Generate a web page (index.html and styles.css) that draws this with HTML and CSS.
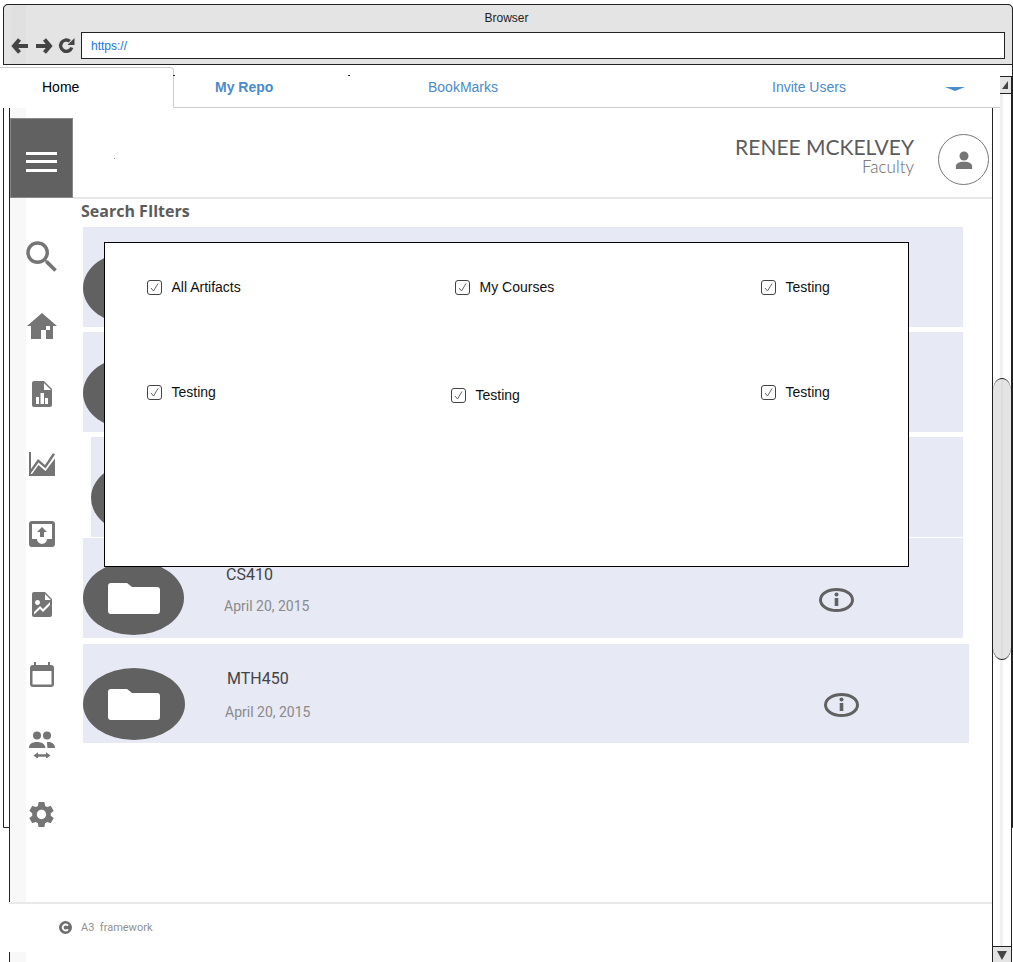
FILE: index.html
```html
<!DOCTYPE html>
<html>
	<head>
		<title>My Repo</title>
		<link rel="stylesheet" href="styles.css">
	</head>
	<body>
		<div class="page">
			<div class="frame"></div>

			<div class="chrome">
				<div class="chrome-title">Browser</div>
				<div class="chrome-bar">
					<svg class="chrome-icon" viewBox="0 0 18 18"><path d="M8.500 2.500 3 9l5.500 6.500M3.500 9H17" fill="none" stroke="#444" stroke-width="4"/></svg>
					<svg class="chrome-icon" viewBox="0 0 18 18"><path d="M9.500 2.500 15 9l-5.500 6.500M14.500 9H1" fill="none" stroke="#444" stroke-width="4"/></svg>
					<svg class="chrome-icon chrome-reload" viewBox="0 0 18 18"><path d="M14.500 11A6 6 0 1 1 12.500 4.500" fill="none" stroke="#444" stroke-width="3.600"/><path d="M10 8.500h7.500V1z" fill="#444"/></svg>
					<div class="address">https://</div>
				</div>
			</div>

			<div class="tabs">
				<div class="tab-home">Home</div>
				<div class="tab tab-repo">My Repo</div>
				<div class="tab tab-bookmarks">BookMarks</div>
				<div class="tab tab-invite">Invite Users</div>
				<div class="caret"></div>
				<span class="speck speck-a"></span>
				<span class="speck speck-b"></span>
			</div>

			<div class="workspace">
				<div class="app">
					<div class="main">
						<div class="nav">
							<div class="menu-btn">
								<span></span><span></span><span></span>
							</div>
							<div class="nav-icons">
								<div class="nav-item nav-search"><svg width="42" height="42" viewBox="0 0 24 24"><path d="M15.5 14h-.79l-.28-.27A6.471 6.471 0 0 0 16 9.5 6.5 6.5 0 1 0 9.5 16c1.61 0 3.09-.59 4.23-1.57l.27.28v.79l5 4.99L20.49 19l-4.99-5zm-6 0C7.01 14 5 11.99 5 9.5S7.01 5 9.5 5 14 7.01 14 9.5 11.99 14 9.5 14z"/></svg></div>
								<div class="nav-item nav-home"><svg width="30" height="26" viewBox="0 0 30 26"><path fill-rule="evenodd" d="M15 0 0 13h4v13h10v-9h5v9h7V13h4zM19 13h4v4h-4z"/></svg></div>
								<div class="nav-item"><svg width="20" height="26" viewBox="0 0 20 26"><path fill-rule="evenodd" d="M2 0h10l8 8v16a2 2 0 0 1-2 2H2a2 2 0 0 1-2-2V2a2 2 0 0 1 2-2zM12 2v7h7zM4 16v7h3v-7zM8.500 12v11H12V12zM13 17v6h3v-6z"/></svg></div>
								<div class="nav-item"><svg width="26" height="24" viewBox="0 0 26 24"><path d="M0 0h2v17l7-10 7 6 8-12 2 1.500-9.500 14L9.500 10.500 2 21v1h1l6.500-9 7 6L26 6.500V24H0z"/></svg></div>
								<div class="nav-item"><svg width="26" height="26" viewBox="0 0 26 26"><path fill-rule="evenodd" d="M3 0h20a3 3 0 0 1 3 3v20a3 3 0 0 1-3 3H3a3 3 0 0 1-3-3V3a3 3 0 0 1 3-3zM3 3v15h5a5 5 0 0 0 10 0h5V3zM13 6l5 5h-3v5h-4v-5H8z"/></svg></div>
								<div class="nav-item"><svg width="20" height="25" viewBox="0 0 20 25"><path fill-rule="evenodd" d="M2 0h11l7 7v16a2 2 0 0 1-2 2H2a2 2 0 0 1-2-2V2a2 2 0 0 1 2-2zM13 2v6h6zM5.500 8a2.500 2.500 0 1 0 .01 0zM2 20v2.500L8 17l3 3 7-7v-3l-7 7-3-3z"/></svg></div>
								<div class="nav-item"><svg width="24" height="25" viewBox="0 0 24 25"><path fill-rule="evenodd" d="M4 0h2v3h12V0h2v3h1a3 3 0 0 1 3 3v16a3 3 0 0 1-3 3H3a3 3 0 0 1-3-3V6a3 3 0 0 1 3-3h1zM2.500 9v13.500h19V9z"/></svg></div>
								<div class="nav-item"><svg width="26" height="27" viewBox="0 0 26 27"><circle cx="8" cy="4.500" r="4"/><circle cx="18" cy="4.500" r="4"/><path d="M0 17c0-4 3-6 8-6s8 2 8.500 6zM18 11c5-.5 8 2 8 6h-7.500c-.2-2-.5-4-.5-6z"/><path d="M9 21.200v2h8v-2l4.500 3.300L17 27.800v-2H9v2l-4.500-3.300z"/></svg></div>
								<div class="nav-item"><svg width="31" height="31" viewBox="0 0 24 24"><path d="M19.14 12.94c.04-.3.06-.61.06-.94 0-.32-.02-.64-.07-.94l2.03-1.58a.49.49 0 0 0 .12-.61l-1.92-3.32a.488.488 0 0 0-.59-.22l-2.39.96c-.5-.38-1.03-.7-1.62-.94l-.36-2.54a.484.484 0 0 0-.48-.41h-3.84c-.24 0-.43.17-.47.41l-.36 2.54c-.59.24-1.13.57-1.62.94l-2.39-.96c-.22-.08-.47 0-.59.22L2.74 8.87c-.12.21-.08.47.12.61l2.03 1.58c-.05.3-.09.63-.09.94s.02.64.07.94l-2.03 1.58a.49.49 0 0 0-.12.61l1.92 3.32c.12.22.37.29.59.22l2.39-.96c.5.38 1.03.7 1.62.94l.36 2.54c.05.24.24.41.48.41h3.84c.24 0 .44-.17.47-.41l.36-2.54c.59-.24 1.13-.56 1.62-.94l2.39.96c.22.08.47 0 .59-.22l1.92-3.32c.12-.22.07-.47-.12-.61l-2.01-1.58zM12 15.6c-1.98 0-3.6-1.62-3.6-3.6s1.62-3.6 3.6-3.6 3.6 1.62 3.6 3.6-1.62 3.6-3.6 3.6z"/></svg></div>
							</div>
						</div>

						<div class="content">
							<div class="header">
								<div class="user">
									<div class="user-name">RENEE MCKELVEY</div>
									<div class="user-role">Faculty</div>
								</div>
								<div class="avatar">
									<svg width="18" height="18" viewBox="0 0 20 20"><circle cx="10" cy="5.500" r="5"/><path d="M1 20v-3c0-3 3-5 9-5s9 2 9 5v3z"/></svg>
								</div>
								<span class="speck speck-c"></span>
							</div>

							<div class="filters-title">Search FIlters</div>

							<div class="list">
								<div class="row"><div class="folder"></div></div>
								<div class="row row-gap"><div class="folder"></div></div>
								<div class="row row-gap row-indent"><div class="folder"></div></div>
								<div class="row row-tight">
									<div class="folder">
										<svg class="folder-icon" width="52" height="31" viewBox="0 0 52 31"><path d="M3 0h16l5 4h25a3 3 0 0 1 3 3v21a3 3 0 0 1-3 3H3a3 3 0 0 1-3-3V3a3 3 0 0 1 3-3z"/></svg>
									</div>
									<div class="course">
										<div class="course-name">CS410</div>
										<div class="course-date">April 20, 2015</div>
									</div>
									<svg class="info" width="35" height="24" viewBox="0 0 35 24"><ellipse cx="17.500" cy="12" rx="16" ry="10.500"/><rect x="15.700" y="10" width="3.600" height="8"/><circle cx="17.500" cy="6.500" r="2"/></svg>
								</div>
								<div class="row row-last">
									<div class="folder">
										<svg class="folder-icon" width="52" height="31" viewBox="0 0 52 31"><path d="M3 0h16l5 4h25a3 3 0 0 1 3 3v21a3 3 0 0 1-3 3H3a3 3 0 0 1-3-3V3a3 3 0 0 1 3-3z"/></svg>
									</div>
									<div class="course">
										<div class="course-name">MTH450</div>
										<div class="course-date">April 20, 2015</div>
									</div>
									<svg class="info" width="35" height="24" viewBox="0 0 35 24"><ellipse cx="17.500" cy="12" rx="16" ry="10.500"/><rect x="15.700" y="10" width="3.600" height="8"/><circle cx="17.500" cy="6.500" r="2"/></svg>
								</div>
							</div>
						</div>
					</div>

					<div class="footer">
						<svg width="13" height="13" viewBox="0 0 13 13"><circle cx="6.500" cy="6.500" r="6.500" fill="#6e6e6e"/><path d="M9 4.600a3 3 0 1 0 0 3.800" fill="none" stroke="#fff" stroke-width="1.800"/></svg>
						<span class="footer-text">A3&nbsp; framework</span>
					</div>
				</div>

				<div class="scrollbar">
					<div class="scroll-btn scroll-up"><span></span></div>
					<div class="scroll-thumb"></div>
					<div class="scroll-btn scroll-down"><span></span></div>
				</div>
			</div>

			<div class="modal">
				<label class="check"><span class="box"><svg width="11" height="11" viewBox="0 0 11 11"><path d="M2 6l2.500 3L9 1.500"/></svg></span>All Artifacts</label>
				<label class="check"><span class="box"><svg width="11" height="11" viewBox="0 0 11 11"><path d="M2 6l2.500 3L9 1.500"/></svg></span>My Courses</label>
				<label class="check"><span class="box"><svg width="11" height="11" viewBox="0 0 11 11"><path d="M2 6l2.500 3L9 1.500"/></svg></span>Testing</label>
				<label class="check"><span class="box"><svg width="11" height="11" viewBox="0 0 11 11"><path d="M2 6l2.500 3L9 1.500"/></svg></span>Testing</label>
				<label class="check check-off"><span class="box"><svg width="11" height="11" viewBox="0 0 11 11"><path d="M2 6l2.500 3L9 1.500"/></svg></span>Testing</label>
				<label class="check"><span class="box"><svg width="11" height="11" viewBox="0 0 11 11"><path d="M2 6l2.500 3L9 1.500"/></svg></span>Testing</label>
			</div>
		</div>
	</body>
</html>
```

FILE: styles.css
```css
* {
	box-sizing: border-box;
}

body {
	margin: 0;
	background-color: white;
	font-family: "Liberation Sans", Arial, sans-serif;
}

.page {
	position: relative;
	width: 1013px;
	height: 962px;
	overflow: hidden;
	padding-top: 4px;
}

.frame {
	position: absolute;
	left: 3px;
	top: 4px;
	width: 1010px;
	height: 824px;
	border: 1px solid #222;
	border-radius: 5px 5px 0 0;
}

/* browser bar */
.chrome {
	position: relative;
	margin-left: 3px;
	width: 1010px;
	height: 61px;
	background: linear-gradient(90deg, #e4e4e4 7px, #e0e0e0 7px, #e0e0e0 22px, #e4e4e4 22px);
	border: 1px solid #222;
	border-radius: 5px 5px 0 0;
}

.chrome-title {
	height: 27px;
	padding-top: 6px;
	padding-right: 3px;
	text-align: center;
	font-size: 12px;
	color: #222;
}

.chrome-bar {
	display: flex;
	align-items: center;
	padding-left: 7px;
}

.chrome-icon {
	width: 18px;
	height: 18px;
	margin-right: 6px;
}

.chrome-reload {
	width: 17px;
	height: 17px;
	margin-right: 6px;
	margin-left: -1px;
}

.address {
	width: 924px;
	height: 27px;
	padding: 6px 9px;
	background-color: white;
	border: 1px solid #222;
	font-size: 12px;
	color: #1a73e8;
}

/* tabs */
.tabs {
	position: relative;
	z-index: 2;
	display: flex;
	width: 1000px;
	height: 43px;
	background-color: white;
	border-bottom: 1px solid #ccc;
	font-size: 14px;
	line-height: 44px;
	color: #4a8bc9;
}

.tab-home {
	width: 174px;
	height: 41px;
	margin-top: 2px;
	padding-left: 42px;
	line-height: 38px;
	background-color: white;
	color: black;
	border: 1px solid #ccc;
	border-left: none;
	border-bottom: 1px solid white;
	border-radius: 0 4px 0 0;
}

.tab-repo {
	width: 213px;
	padding-left: 41px;
	font-weight: bold;
}

.tab-bookmarks {
	width: 385px;
	padding-left: 41px;
}

.tab-invite {
	width: 173px;
}

.caret {
	width: 0;
	height: 0;
	margin-top: 22px;
	border-left: 10px solid transparent;
	border-right: 10px solid transparent;
	border-top: 4px solid #4a8bc9;
}

.speck {
	position: absolute;
	width: 2px;
	height: 1px;
	background-color: #222;
}

.speck-a {
	left: 173px;
	top: 10px;
}

.speck-b {
	left: 348px;
	top: 10px;
}

.speck-c {
	left: 41px;
	top: 40px;
	background-color: #999;
	height: 1px;
	width: 1px;
}

/* everything under the tabs */
.workspace {
	position: relative;
	display: flex;
	margin-top: -32px;
	margin-left: 9px;
	height: 887px;
}

.app {
	display: flex;
	flex-direction: column;
	width: 983px;
	padding-top: 42px;
	background: linear-gradient(90deg, #f8f8f8 16px, white 16px);
	border-left: 1px solid #222;
}

.main {
	display: flex;
	flex: 1;
}

.nav {
	width: 63px;
}

.menu-btn {
	display: flex;
	flex-direction: column;
	justify-content: center;
	gap: 5.500px;
	width: 63px;
	height: 80px;
	padding: 7px 15px 0;
	background-color: #616161;
	border: 1px solid #888;
}

.menu-btn span {
	height: 3px;
	background-color: white;
}

.nav-icons {
	padding-top: 21px;
}

.nav-item {
	display: flex;
	justify-content: center;
	align-items: center;
	height: 70px;
}

.nav-item svg {
	fill: #757575;
}

.nav-search {
	padding-top: 6px;
}

.nav-home {
	padding-top: 4px;
}

.content {
	flex: 1;
}

.header {
	position: relative;
	display: flex;
	justify-content: flex-end;
	align-items: center;
	height: 81px;
	padding-right: 3px;
	border-bottom: 2px solid #e6e6e6;
}

.user {
	margin-right: 25px;
	margin-top: -5px;
	text-align: right;
	font-family: Lato, sans-serif;
}

.user-name {
	font-size: 21px;
	line-height: 24px;
	color: #5c5c5c;
}

.user-role {
	font-size: 17px;
	line-height: 16px;
	font-weight: 300;
	color: #666;
}

.avatar {
	display: flex;
	justify-content: center;
	align-items: center;
	width: 51px;
	height: 51px;
	margin-top: 4px;
	margin-left: -1px;
	border: 1px solid #777;
	border-radius: 50%;
}

.avatar svg {
	fill: #757575;
}

.filters-title {
	height: 28px;
	padding-left: 8px;
	font-family: "Open Sans", sans-serif;
	font-size: 16px;
	font-weight: bold;
	line-height: 24px;
	color: #5c5c5c;
}

.list {
	padding-left: 10px;
}

.row {
	display: flex;
	align-items: flex-start;
	width: 880px;
	height: 100px;
	padding-top: 24px;
	background-color: #e7e9f5;
}

.row-gap {
	margin-top: 5px;
}

.row-indent {
	width: 872px;
	margin-left: 8px;
}

.row-tight {
	margin-top: 1px;
	padding-top: 23px;
}

.row-last {
	width: 886px;
	height: 99px;
	margin-top: 6px;
}

.folder {
	display: flex;
	justify-content: center;
	align-items: center;
	flex: none;
	width: 101px;
	height: 74px;
	background-color: #616161;
	border-radius: 50%;
}

.row-last .folder {
	width: 102px;
	height: 72px;
}

.folder-icon {
	fill: white;
}

.course {
	margin-left: 40px;
	margin-top: 2px;
}

.course-name {
	margin-left: 2px;
	font-family: Roboto, sans-serif;
	font-size: 16px;
	line-height: 24px;
	color: #444;
}

.course-date {
	margin-top: 9px;
	font-family: Roboto, sans-serif;
	font-size: 14px;
	line-height: 20px;
	color: #8a8a8a;
}

.row-last .course {
	margin-top: -1px;
}

.row-last .course-date {
	margin-top: 11px;
}

.info {
	margin-left: auto;
	margin-right: 109px;
	margin-top: 27px;
	fill: #616161;
}

.row-last .info {
	margin-right: 110px;
	margin-top: 25px;
}

.info ellipse {
	fill: none;
	stroke: #616161;
	stroke-width: 3;
}

/* filter popup */
.modal {
	position: absolute;
	z-index: 3;
	left: 104px;
	top: 242px;
	width: 805px;
	height: 325px;
	display: grid;
	grid-template-columns: 308px 306px 1fr;
	grid-auto-rows: 105px;
	padding: 36px 0 0 42px;
	background-color: white;
	border: 1px solid black;
}

.check {
	display: flex;
	align-items: center;
	gap: 9.500px;
	height: 16px;
	font-size: 14px;
	color: #111;
}

.check-off {
	margin: 3px 0 0 -4px;
}

.box {
	display: flex;
	justify-content: center;
	align-items: center;
	width: 15px;
	height: 15px;
	border: 1.500px solid #444;
	border-radius: 3px;
}

.box svg {
	fill: none;
	stroke: #666;
	stroke-width: 1;
}

.footer {
	display: flex;
	align-items: center;
	height: 50px;
	margin-bottom: 11px;
	margin-left: -1px;
	padding-left: 50px;
	padding-bottom: 2px;
	background-color: white;
	border-top: 2px solid #e9e9e9;
}

.footer-text {
	margin-left: 9px;
	font-family: Roboto, sans-serif;
	font-size: 11px;
	color: #919191;
}

/* right scrollbar */
.scrollbar {
	display: flex;
	flex-direction: column;
	width: 20px;
	background: linear-gradient(90deg, white 7px, #f0f0f0 7px, #f0f0f0 10px, white 10px);
	border-left: 1px solid #222;
	border-right: 1px solid #222;
	border-top: 1px solid #222;
}

.scroll-btn {
	display: flex;
	justify-content: center;
	align-items: center;
	height: 17px;
	background-color: #e4e4e4;
}

.scroll-up {
	border-bottom: 1px solid #222;
}

.scroll-up span {
	width: 0;
	height: 0;
	margin-left: 6px;
	border-left: 6px solid transparent;
	border-bottom: 8px solid #444;
}

.scroll-down {
	margin-top: auto;
	border-top: 1px solid #222;
}

.scroll-down span {
	width: 0;
	height: 0;
	border-left: 5px solid transparent;
	border-right: 5px solid transparent;
	border-top: 9px solid #444;
}

.scroll-thumb {
	height: 282px;
	margin-top: 284px;
	background: linear-gradient(90deg, #e4e4e4 8px, #dcdcdc 8px, #dcdcdc 10px, #e4e4e4 10px);
	border-top: 1px solid #222;
	border-bottom: 1px solid #222;
	border-radius: 9px 9px 9px 9px / 12px 12px 12px 12px;
}
```
